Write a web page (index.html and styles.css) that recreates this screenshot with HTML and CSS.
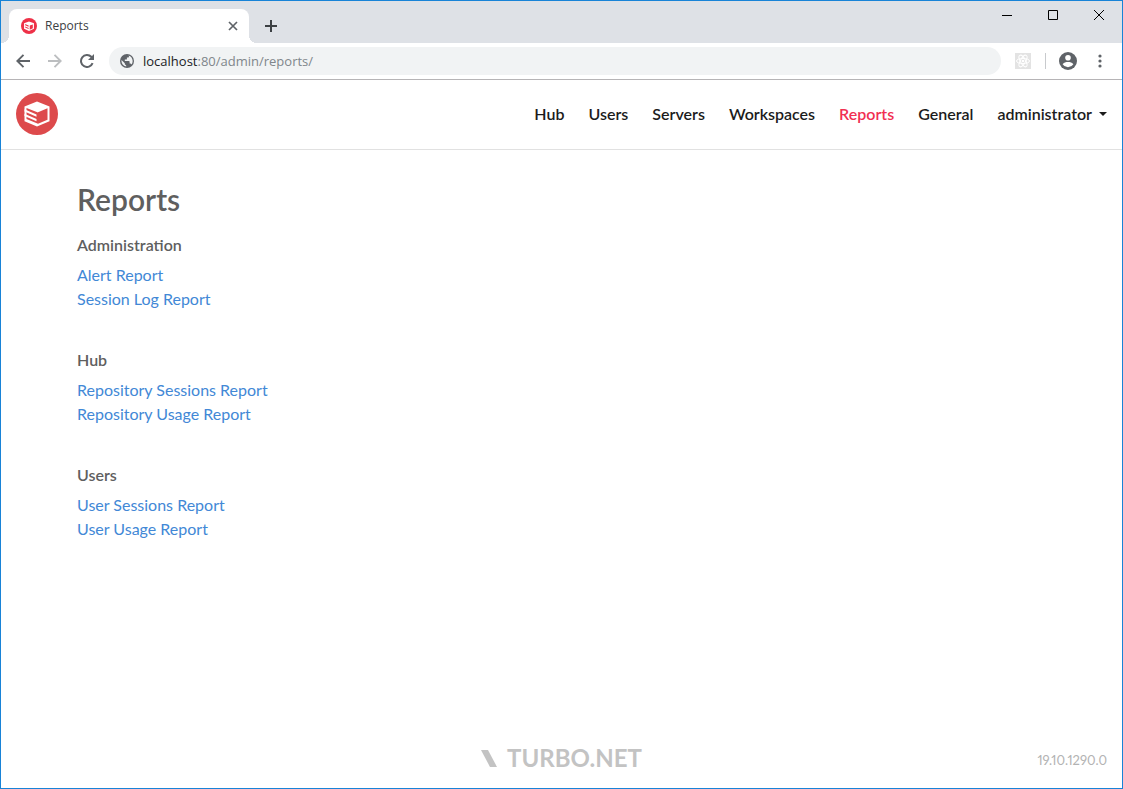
FILE: index.html
```html
<!DOCTYPE html>
<html lang="en">
<head>
<meta charset="utf-8">
<meta name="viewport" content="width=device-width, initial-scale=1">
<title>Reports</title>
<link rel="stylesheet" href="styles.css">
</head>
<body>
<div class="window">
  <div class="tab-strip">
    <div class="tab">
      <svg class="favicon" viewBox="0 0 42 42" width="16" height="16" aria-hidden="true">
        <circle cx="21" cy="21" r="21" fill="#ee3148"/>
        <path d="M21 9l13 5v14l-13 6-13-6V14z" fill="#fff"/>
        <path d="M23 20l8-3v10l-8 4zM11 16l9 4v3l-9-4zM11 22l9 4v3l-9-4z" fill="#ee3148"/>
      </svg>
      <span class="tab-title">Reports</span>
      <button class="icon-button tab-close" aria-label="Close tab">
        <svg viewBox="0 0 10 10" width="10" height="10"><path d="M1 1l8 8M9 1l-8 8" stroke="#5f6368" stroke-width="1.7" fill="none"/></svg>
      </button>
    </div>
    <button class="icon-button new-tab" aria-label="New tab">
      <svg viewBox="0 0 12 12" width="12" height="12"><path d="M6 0v12M0 6h12" stroke="#3c4043" stroke-width="2" fill="none"/></svg>
    </button>
    <div class="window-controls">
      <button class="icon-button" aria-label="Minimize"><svg viewBox="0 0 10 10" width="10" height="10"><path d="M0 5.5h10" stroke="#000"/></svg></button>
      <button class="icon-button" aria-label="Maximize"><svg viewBox="0 0 10 10" width="10" height="10"><path d="M.5.5h9v9h-9z" stroke="#000" fill="none"/></svg></button>
      <button class="icon-button" aria-label="Close"><svg viewBox="0 0 10 10" width="10" height="10"><path d="M0 0l10 10M10 0L0 10" stroke="#000" fill="none"/></svg></button>
    </div>
  </div>

  <div class="toolbar">
    <button class="icon-button tool" aria-label="Back">
      <svg viewBox="0 0 14 14" width="14" height="14"><path d="M14 7H1.5M7.5.8L1.3 7l6.2 6.2" stroke="#5f6368" stroke-width="1.9" fill="none"/></svg>
    </button>
    <button class="icon-button tool" aria-label="Forward" disabled>
      <svg viewBox="0 0 14 14" width="14" height="14"><path d="M0 7h12.5M6.5.8L12.7 7l-6.2 6.2" stroke="#bcbec0" stroke-width="1.9" fill="none"/></svg>
    </button>
    <button class="icon-button tool" aria-label="Reload">
      <svg viewBox="0 0 14 14" width="14" height="14"><path d="M12.6 9.2A6 6 0 1 1 11.3 2.8L12.5 4" stroke="#5f6368" stroke-width="2" fill="none"/><path d="M14 0v6H8z" fill="#5f6368"/></svg>
    </button>
    <div class="address">
      <svg viewBox="0 0 14 14" width="14" height="14" aria-hidden="true">
        <circle cx="7" cy="7" r="7" fill="#5f6368"/>
        <path d="M1.5 6l3.3 3.3v1l1.4 1.2v1.1A5.7 5.7 0 0 1 1.5 6zM8.5 1.6c1.5.4 2.8 1.4 3.5 2.8 1 1.9.9 4.300-.5 6.100-.2-.6-.7-.9-1.300-.9h-.6V7.700c0-.4-.3-.7-.7-.7H4.800V5.600h1.400c.4 0 .7-.3.7-.7V3.500h1.300c.5 0 .8-.4.8-.9z" fill="#f1f3f4"/>
      </svg>
      <div class="url"><span class="host">localhost</span>:80/admin/reports/</div>
    </div>
    <button class="icon-button extension" aria-label="React extension">
      <svg viewBox="0 0 16 16" width="16" height="16"><rect width="16" height="16" fill="#e3e3e3"/><g stroke="#fff" fill="none" stroke-width="1"><ellipse cx="8" cy="8" rx="6.5" ry="2.6"/><ellipse cx="8" cy="8" rx="6.5" ry="2.6" transform="rotate(60 8 8)"/><ellipse cx="8" cy="8" rx="6.5" ry="2.6" transform="rotate(120 8 8)"/></g><circle cx="8" cy="8" r="1.3" fill="#fff"/></svg>
    </button>
    <span class="divider"></span>
    <button class="icon-button profile" aria-label="Profile">
      <svg viewBox="0 0 18 18" width="18" height="18"><circle cx="9" cy="9" r="9" fill="#5f6368"/><circle cx="9" cy="5.7" r="2.8" fill="#fff"/><path d="M3.6 12.2c1-1.7 3.3-2.3 5.4-2.3s4.4.6 5.4 2.3A6.5 6.5 0 0 1 9 15.2a6.5 6.5 0 0 1-5.4-3z" fill="#fff"/></svg>
    </button>
    <button class="icon-button menu" aria-label="Browser menu">
      <svg viewBox="0 0 4 14" width="4" height="14"><g fill="#5f6368"><circle cx="2" cy="2" r="1.6"/><circle cx="2" cy="7" r="1.6"/><circle cx="2" cy="12" r="1.6"/></g></svg>
    </button>
  </div>

  <header class="site-header">
    <a class="logo" href="#" aria-label="Home">
      <svg viewBox="0 0 42 42" width="42" height="42">
        <circle cx="21" cy="21" r="21" fill="#dd4a4c"/>
        <path d="M21 8.500l12.500 5v14.800L21 33.500 8.500 28.300V13.500z" fill="#fff"/>
        <path d="M22 19.300l9.500-4v11.500L22 30.800zM10.500 15L22 19.500v11.300L10.500 26z" fill="#dd4a4c"/>
        <path d="M8.500 16.200L20.500 21.400v2.400L8.500 18.600zM8.500 20.700L20.500 25.900v2.400L8.500 23.100z" fill="#fff"/>
      </svg>
    </a>
    <nav class="site-nav" aria-label="Main">
      <a href="#">Hub</a>
      <a href="#">Users</a>
      <a href="#">Servers</a>
      <a href="#">Workspaces</a>
      <a href="#" class="active" aria-current="page">Reports</a>
      <a href="#">General</a>
      <button class="account" aria-haspopup="true">administrator<span class="caret"></span></button>
    </nav>
  </header>

  <main class="content">
    <h1>Reports</h1>
    <section>
      <h2>Administration</h2>
      <ul>
        <li><a href="#">Alert Report</a></li>
        <li><a href="#">Session Log Report</a></li>
      </ul>
    </section>
    <section>
      <h2>Hub</h2>
      <ul>
        <li><a href="#">Repository Sessions Report</a></li>
        <li><a href="#">Repository Usage Report</a></li>
      </ul>
    </section>
    <section>
      <h2>Users</h2>
      <ul>
        <li><a href="#">User Sessions Report</a></li>
        <li><a href="#">User Usage Report</a></li>
      </ul>
    </section>
  </main>

  <footer class="site-footer">
    <a class="brand" href="#">
      <svg viewBox="0 0 16 17" width="16" height="17" aria-hidden="true"><path d="M0 0h7l9 17H9z" fill="#c3c3c3"/></svg>
      <span>TURBO.NET</span>
    </a>
    <span class="version">19.10.1290.0</span>
  </footer>
</div>
</body>
</html>
```
FILE: styles.css
```css
* {
  box-sizing: border-box;
}

body {
  margin: 0;
  background: #fff;
  color: #5f5f5f;
  font-family: Lato, "Liberation Sans", sans-serif;
  font-size: 16px;
  line-height: 24px;
}

a {
  color: #4288d6;
  text-decoration: none;
}

button {
  padding: 0;
  border: 0;
  background: none;
  color: inherit;
  font: inherit;
}

svg {
  display: block;
}

.window {
  display: flex;
  flex-direction: column;
  min-height: 100vh;
  border: 1px solid #1883d7;
}

.icon-button {
  display: flex;
  flex: none;
  align-items: center;
  justify-content: center;
}

/* Browser chrome */
.tab-strip {
  display: flex;
  height: 42px;
  padding-left: 8px;
  background: #dee1e6;
  font-family: "Open Sans", sans-serif;
}

.tab {
  position: relative;
  display: flex;
  flex: 0 1 240px;
  align-items: center;
  gap: 8px;
  height: 34px;
  margin-top: 8px;
  padding: 0 10px 0 12px;
  border-radius: 8px 8px 0 0;
  background: #fff;
  color: #3c4043;
  font-size: 12px;
}

.tab::before,
.tab::after {
  content: "";
  position: absolute;
  bottom: 0;
  width: 8px;
  height: 8px;
}

.tab::before {
  right: 100%;
  background: radial-gradient(circle at 0 0, #dee1e6 8px, #fff 8px);
}

.tab::after {
  left: 100%;
  background: radial-gradient(circle at 100% 0, #dee1e6 8px, #fff 8px);
}

.tab-title {
  flex: 1;
}

.tab-close {
  width: 12px;
  height: 16px;
}

.new-tab {
  width: 28px;
  height: 34px;
  margin: 8px 0 0 8px;
}

.window-controls {
  display: flex;
  height: 28px;
  margin-left: auto;
}

.window-controls button {
  width: 46px;
}

.toolbar {
  display: flex;
  align-items: center;
  height: 37px;
  padding: 0 14px 0 6px;
  border-bottom: 1px solid #b6b4b6;
}

.tool {
  width: 32px;
  height: 28px;
}

.address {
  display: flex;
  flex: 1;
  align-items: center;
  gap: 9px;
  height: 28px;
  margin-left: 6px;
  padding-left: 11px;
  border-radius: 14px;
  background: #f1f3f4;
  color: #80868b;
  font-family: "Open Sans", sans-serif;
  font-size: 13px;
}

.host {
  color: #202124;
}

.extension {
  margin-left: 14px;
}

.divider {
  width: 1px;
  height: 16px;
  margin: 0 13px 0 14px;
  background: #c8cacd;
}

.menu {
  width: 16px;
  margin-left: 15px;
}

/* Site header */
.site-header {
  display: flex;
  align-items: center;
  justify-content: space-between;
  height: 70px;
  padding: 0 15px 2px;
  border-bottom: 1px solid #e1e1e1;
}

.site-nav {
  display: flex;
  gap: 24px;
  color: #1c1c1c;
  font-weight: 600;
}

.site-nav a {
  color: inherit;
}

.site-nav .active {
  color: #f12f52;
}

.account {
  display: flex;
  align-items: center;
  gap: 7px;
}

.caret {
  border: 4px solid transparent;
  border-top-color: currentColor;
  border-bottom: 0;
}

/* Report list */
.content {
  flex: 1;
  padding: 31px 76px;
}

h1 {
  margin: 0 0 11px;
  font-size: 30px;
  font-weight: 600;
  line-height: 36px;
}

h2 {
  margin: 0 0 6px;
  font-size: 16px;
  font-weight: 600;
  line-height: 24px;
}

section {
  padding-top: 5px;
  margin-bottom: 32px;
}

ul {
  margin: 0;
  padding: 0;
  list-style: none;
}

/* Footer */
.site-footer {
  display: grid;
  grid-template-columns: 1fr auto 1fr;
  align-items: center;
  padding: 0 15px 16px;
}

.brand {
  display: flex;
  grid-column: 2;
  align-items: center;
  gap: 10px;
  color: #c3c3c3;
  font-size: 24px;
  font-weight: 700;
}

.version {
  justify-self: end;
  padding-top: 4px;
  color: #b3b3b3;
  font-size: 13px;
  font-variant-numeric: proportional-nums;
}
```
